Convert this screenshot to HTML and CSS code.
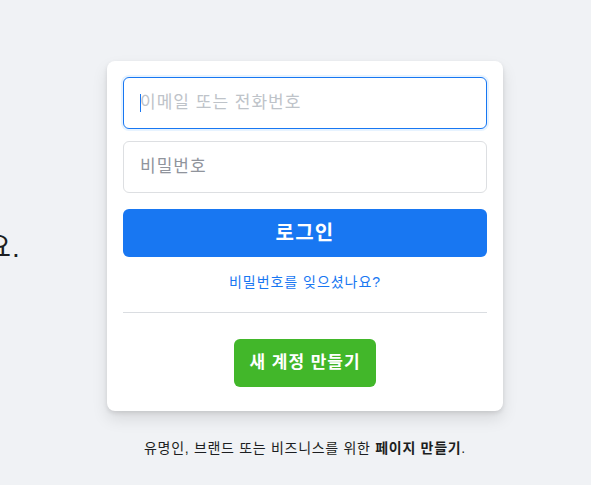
FILE: index.html
```html
<!DOCTYPE html>
<html lang="ko">
<head>
<meta charset="utf-8">
<title>Facebook - 로그인 또는 가입</title>
<link rel="stylesheet" href="styles.css">
</head>
<body>
<div class="page">
  <div class="intro">
    <h2 class="tagline">Facebook에서 전세계에 있는 친구, 가족, 지인들과 함께 이야기를 나눠보세요.</h2>
  </div>
  <div class="login-col">
    <form class="card">
      <div class="field field-focus">
        <input class="input input-focused" type="text" placeholder="이메일 또는 전화번호">
      </div>
      <div class="field field-last">
        <input class="input" type="password" placeholder="비밀번호">
      </div>
      <button class="btn-login" type="button">로그인</button>
      <a class="forgot" href="#">비밀번호를 잊으셨나요?</a>
      <div class="divider"></div>
      <div class="create-wrap">
        <a class="btn-create" href="#">새 계정 만들기</a>
      </div>
    </form>
    <p class="pages">유명인, 브랜드 또는 비즈니스를 위한 <a href="#" class="pages-link">페이지 만들기</a>.</p>
  </div>
</div>
</body>
</html>
```

FILE: styles.css
```css
* { box-sizing: border-box; }
html, body {
  margin: 0;
  height: 485px;
  overflow: hidden;
  background: #f0f2f5;
  font-family: "Liberation Sans", "Noto Sans CJK KR", sans-serif;
  letter-spacing: 0.06em;
  color: #1c1e21;
}
.page {
  display: flex;
  align-items: flex-start;
  gap: 86px;
  padding-top: 61px;
}
.intro {
  flex: 0 0 21px;
  min-width: 0;
  display: flex;
  justify-content: flex-end;
  padding-top: 171px;
}
.tagline {
  flex-shrink: 0;
  margin: 0;
  white-space: nowrap;
  font-size: 28px;
  line-height: 32px;
  font-weight: normal;
  letter-spacing: 0.04em;
  color: #1c1e21;
}
.login-col {
  flex: 0 0 396px;
  display: flex;
  flex-direction: column;
}
.card {
  display: flex;
  flex-direction: column;
  background: #fff;
  border-radius: 8px;
  box-shadow: 0 2px 4px rgba(0, 0, 0, .1), 0 8px 16px rgba(0, 0, 0, .1);
  padding: 16px 16px 24px;
  margin: 0;
}
.field {
  position: relative;
  height: 52px;
  margin-bottom: 12px;
}
.field-last { margin-bottom: 16px; }
.input {
  display: block;
  width: 100%;
  height: 52px;
  padding: 14px 16px;
  font-family: "Liberation Sans", "Noto Sans CJK KR", sans-serif;
  font-size: 17px;
  line-height: 22px;
  letter-spacing: 0.06em;
  color: #1d2129;
  border: 1px solid #dddfe2;
  border-radius: 6px;
  outline: none;
  background: #fff;
  caret-color: transparent;
}
.input::placeholder { color: #90949c; }
.input-focused {
  border-color: #1877f2;
  box-shadow: 0 0 0 2px #e7f3ff;
}
.input-focused::placeholder { color: #bec3c9; }
.field-focus::after {
  content: "";
  position: absolute;
  left: 17px;
  top: 17px;
  width: 1px;
  height: 18px;
  background: #1877f2;
}
.btn-login {
  height: 48px;
  border: none;
  border-radius: 6px;
  background: #1877f2;
  color: #fff;
  font-family: "Liberation Sans", "Noto Sans CJK KR", sans-serif;
  font-size: 20px;
  font-weight: bold;
  line-height: 48px;
  letter-spacing: 0.06em;
  padding: 0 16px;
}
.forgot {
  margin-top: 16px;
  text-align: center;
  font-size: 14px;
  line-height: 19px;
  color: #1877f2;
  text-decoration: none;
}
.divider {
  margin-top: 20px;
  border-bottom: 1px solid #dadde1;
}
.create-wrap {
  display: flex;
  justify-content: center;
  margin-top: 26px;
}
.btn-create {
  display: block;
  height: 48px;
  padding: 0 16px;
  border-radius: 6px;
  background: #42b72a;
  color: #fff;
  font-size: 17px;
  font-weight: bold;
  line-height: 48px;
  text-decoration: none;
}
.pages {
  margin: 28px 0 0;
  text-align: center;
  font-size: 14px;
  line-height: 19px;
  letter-spacing: 0.05em;
  color: #1c1e21;
}
.pages-link {
  font-weight: bold;
  color: #1c1e21;
  text-decoration: none;
}
```
